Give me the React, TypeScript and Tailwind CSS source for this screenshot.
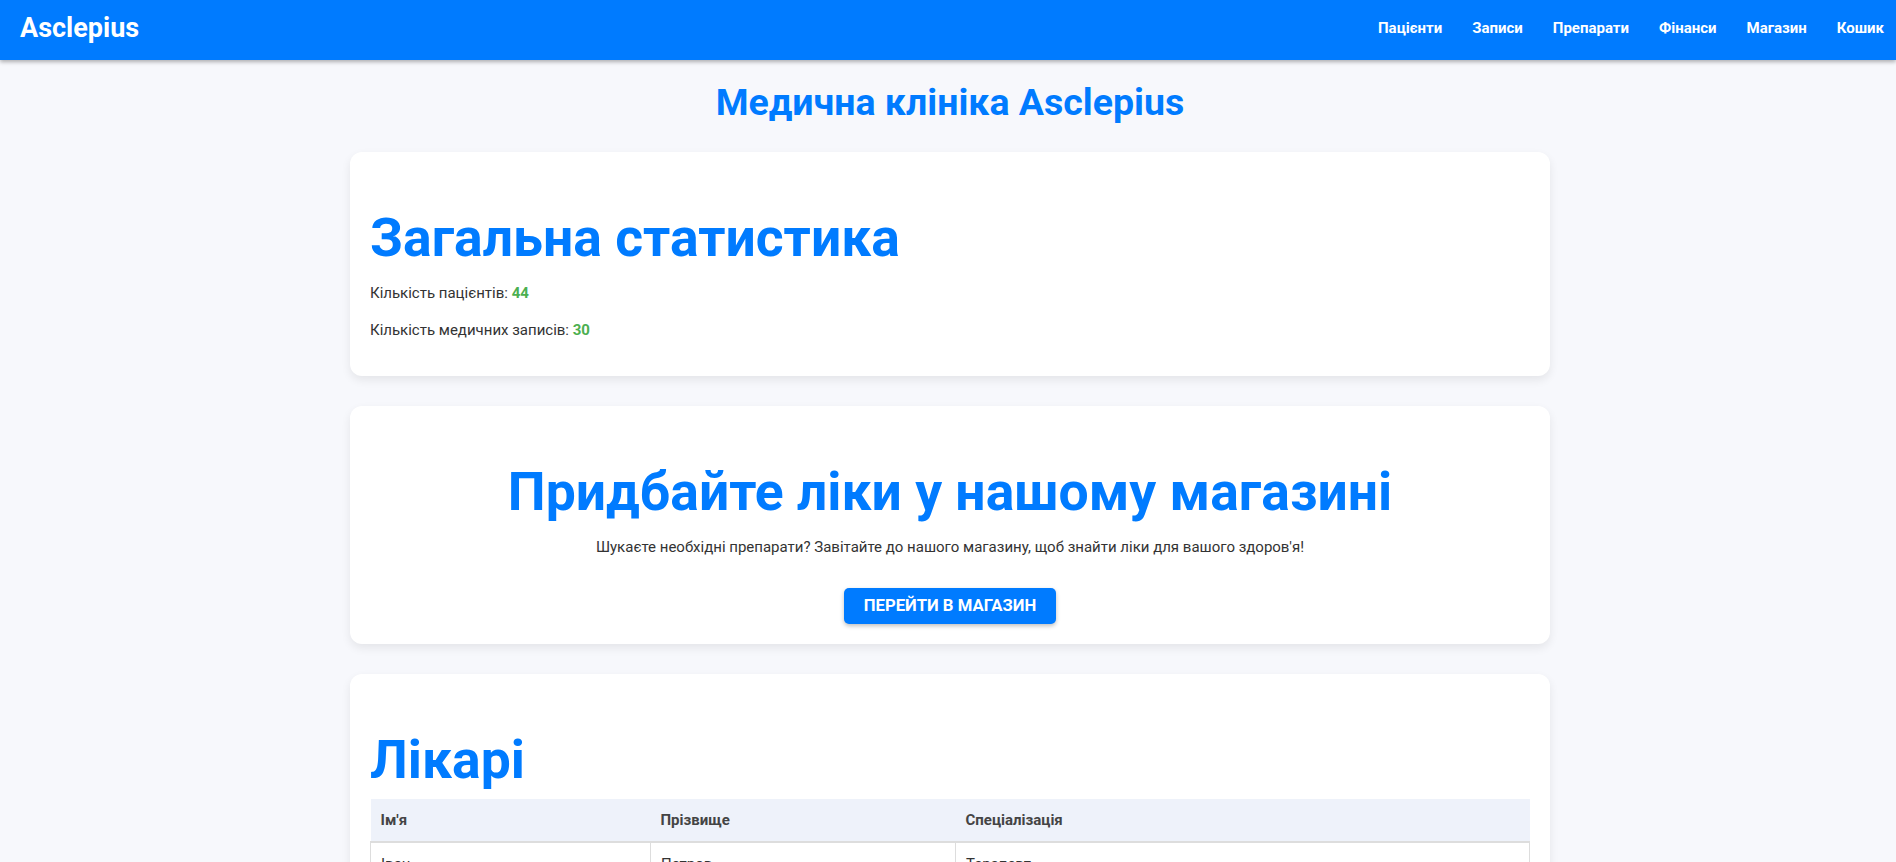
import React from 'react';

const navLinks = ['Пацієнти', 'Записи', 'Препарати', 'Фінанси', 'Магазин', 'Кошик'];

const doctors = [
  { name: 'Іван', surname: 'Петров', spec: 'Терапевт' },
  { name: 'Олена', surname: 'Коваленко', spec: 'Кардіолог' },
  { name: 'Андрій', surname: 'Шевченко', spec: 'Хірург' },
  { name: 'Марія', surname: 'Бондаренко', spec: 'Педіатр' },
];

export default function App() {
  return (
    <div className="min-h-screen bg-[#f7f8fc] text-[#333] font-['Roboto','Liberation_Sans',sans-serif] text-[15px] leading-[1.5]">
      {/* header */}
      <header className="h-[60px] bg-[#007bff] flex items-center justify-between pl-5 pr-[12px] pb-[5px] shadow-[0_2px_4px_rgba(0,0,0,0.3)] relative z-10">
        <div className="text-white text-[27px] font-bold leading-[normal]">Asclepius</div>
        <nav className="flex items-center gap-[30px]">
          {navLinks.map((l) => (
            <a key={l} href="#" className="text-white text-[15px] font-bold leading-[normal]">
              {l}
            </a>
          ))}
        </nav>
      </header>

      <main className="pt-5 pb-10 pl-[4px]">
        <h1 className="text-center text-[#007bff] text-[37.5px] font-bold leading-[normal] mb-[28px]">
          Медична клініка Asclepius
        </h1>

        <div className="w-[1200px] mx-auto flex flex-col gap-[30px]">
          {/* stats */}
          <section className="bg-white rounded-xl p-5 shadow-[0_4px_10px_rgba(0,0,0,0.08)]">
            <h2 className="text-[#007bff] text-[53.5px] font-bold leading-[normal] mt-[34px] mb-[13px]">
              Загальна статистика
            </h2>
            <p>
              Кількість пацієнтів: <span className="text-[#4caf50] font-bold">44</span>
            </p>
            <p className="mt-[14px] mb-[15px]">
              Кількість медичних записів: <span className="text-[#4caf50] font-bold">30</span>
            </p>
          </section>

          {/* shop promo */}
          <section className="bg-white rounded-xl p-5 shadow-[0_4px_10px_rgba(0,0,0,0.08)] text-center">
            <h2 className="text-[#007bff] text-[53.5px] font-bold leading-[normal] mt-[34px] mb-[13px]">
              Придбайте ліки у нашому магазині
            </h2>
            <p>Шукаєте необхідні препарати? Завітайте до нашого магазину, щоб знайти ліки для вашого здоров'я!</p>
            <button className="mt-[29px] bg-[#007bff] text-white text-[16.7px] font-bold uppercase leading-[normal] px-5 py-[8.5px] rounded-[5px] shadow-[0_2px_4px_rgba(0,0,0,0.25)]">
              Перейти в магазин
            </button>
          </section>

          {/* doctors */}
          <section className="bg-white rounded-xl p-5 shadow-[0_4px_10px_rgba(0,0,0,0.08)]">
            <h2 className="text-[#007bff] text-[53.5px] font-bold leading-[normal] mt-[34px] mb-[8px]">Лікарі</h2>
            <table className="w-full border-collapse text-left">
              <thead>
                <tr className="bg-[#eef2fa]">
                  <th className="w-[280px] px-[10px] py-[10px] font-bold text-[#444] border-b-2 border-[#ddd]">Ім'я</th>
                  <th className="w-[305px] px-[10px] py-[10px] font-bold text-[#444] border-b-2 border-[#ddd]">Прізвище</th>
                  <th className="px-[10px] py-[10px] font-bold text-[#444] border-b-2 border-[#ddd]">Спеціалізація</th>
                </tr>
              </thead>
              <tbody>
                {doctors.map((d) => (
                  <tr key={d.surname}>
                    <td className="px-[10px] py-[10px] border border-[#ddd]">{d.name}</td>
                    <td className="px-[10px] py-[10px] border border-[#ddd]">{d.surname}</td>
                    <td className="px-[10px] py-[10px] border border-[#ddd]">{d.spec}</td>
                  </tr>
                ))}
              </tbody>
            </table>
          </section>
        </div>
      </main>
    </div>
  );
}
